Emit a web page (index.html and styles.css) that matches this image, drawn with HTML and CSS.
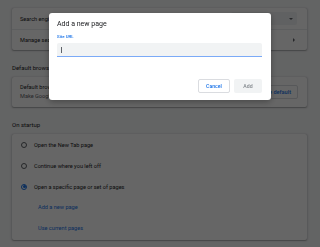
FILE: index.html
```html
<!DOCTYPE html>
<html>
<head>
<meta charset="utf-8">
<link rel="stylesheet" href="styles.css">
</head>
<body>
<div class="page">
  <div class="card">
    <div class="row">
      <span class="label">Search engine used in the address bar</span>
      <span class="select"><span class="caret-down"></span></span>
    </div>
    <div class="row divided">
      <span class="label">Manage search engines</span>
      <span class="caret-right"></span>
    </div>
  </div>

  <div class="heading">Default browser</div>
  <div class="card card2">
    <div class="two-line">
      <span>Default browser</span>
      <span>Make Google Chrome the default browser</span>
    </div>
    <span class="btn-outline">Make default</span>
  </div>

  <div class="heading">On startup</div>
  <div class="card card3">
    <div class="radio-row"><span class="radio"></span><span>Open the New Tab page</span></div>
    <div class="radio-row"><span class="radio"></span><span>Continue where you left off</span></div>
    <div class="radio-row"><span class="radio checked"></span><span>Open a specific page or set of pages</span></div>
    <div class="link-row">Add a new page</div>
    <div class="link-row">Use current pages</div>
  </div>
</div>

<div class="scrim"></div>
<div class="dialog">
  <div class="dlg-title">Add a new page</div>
  <div class="field-label">Site URL</div>
  <div class="input"><span class="cursor"></span></div>
  <div class="actions">
    <span class="btn cancel">Cancel</span>
    <span class="btn add">Add</span>
  </div>
</div>
</body>
</html>
```

FILE: styles.css
```css
* { box-sizing: border-box; }
html, body { margin: 0; padding: 0; }
body {
  width: 320px;
  height: 247px;
  overflow: hidden;
  background: #f8f9fa;
  font-family: Roboto, "Liberation Sans", sans-serif;
  color: #202124;
  font-size: 5.6px;
}
.page {
  padding: 8px 13px 0 12px;
}
.card {
  background: #fff;
  border-radius: 2px;
  box-shadow: 0 0.5px 1px rgba(60,64,67,.3), 0 0.5px 2px 0.5px rgba(60,64,67,.15);
}
.row {
  height: 21px;
  display: flex;
  align-items: center;
  padding: 0 10px 0 8px;
  justify-content: space-between;
}
.divided { border-top: 1px solid #e8eaed; height: 21px; }
.select {
  width: 66px;
  height: 13px;
  background: #f1f3f4;
  border-radius: 2px;
  display: flex;
  align-items: center;
  justify-content: flex-end;
  padding-right: 4px;
}
.caret-down {
  width: 0; height: 0;
  border-left: 2px solid transparent;
  border-right: 2px solid transparent;
  border-top: 2px solid #5f6368;
}
.caret-right {
  width: 0; height: 0;
  border-top: 2px solid transparent;
  border-bottom: 2px solid transparent;
  border-left: 2px solid #5f6368;
  margin-right: 2px;
}
.heading {
  padding: 14px 0 0 0;
  height: 27px;
  line-height: 8px;
  font-size: 6px;
  color: #202124;
}
.heading + .card3 { }
.card2 {
  height: 30px;
  display: flex;
  align-items: center;
  justify-content: space-between;
  padding: 0 9px 0 8px;
}
.two-line {
  display: flex;
  flex-direction: column;
  line-height: 9px;
}
.two-line span:last-child { color: #5f6368; }
.btn-outline {
  height: 14px;
  line-height: 12px;
  border: 1px solid #dadce0;
  border-radius: 2px;
  padding: 0 6px;
  color: #1a73e8;
  font-weight: 500;
}
.card3 {
  height: 106px;
  padding: 0;
}
.radio-row {
  height: 21px;
  display: flex;
  align-items: center;
  padding-left: 9px;
  gap: 7px;
}
.radio {
  width: 6px; height: 6px;
  border: 1px solid #5f6368;
  border-radius: 50%;
  display: flex;
  align-items: center;
  justify-content: center;
}
.radio.checked { border-color: #1a73e8; }
.radio.checked::after {
  content: "";
  width: 3px; height: 3px;
  border-radius: 50%;
  background: #1a73e8;
}
.link-row {
  height: 21px;
  line-height: 21px;
  padding-left: 26px;
  color: #1a73e8;
}
.scrim {
  position: fixed;
  inset: 0;
  background: rgba(0,0,0,0.6);
}
.dialog {
  position: fixed;
  left: 49px;
  top: 13px;
  width: 222px;
  height: 87px;
  background: #fff;
  border-radius: 3px;
  box-shadow: 0 2px 6px rgba(0,0,0,.3);
  padding: 7px 9px 7px 8px;
  display: flex;
  flex-direction: column;
}
.dlg-title {
  font-size: 7px;
  line-height: 9px;
  color: #202124;
}
.field-label {
  margin-top: 5px;
  font-size: 4.4px;
  line-height: 5px;
  color: #1a73e8;
  font-weight: 500;
}
.input {
  margin-top: 4px;
  height: 14px;
  background: #f1f3f4;
  border-radius: 2px 2px 0 0;
  border-bottom: 1px solid #7baaf7;
  display: flex;
  align-items: center;
  padding-left: 4px;
}
.cursor {
  width: 0.7px;
  height: 6px;
  background: #5f6368;
}
.actions {
  margin-top: auto;
  display: flex;
  justify-content: flex-end;
  gap: 4px;
}
.btn {
  height: 14px;
  line-height: 14px;
  border-radius: 2px;
  text-align: center;
  font-weight: 500;
  font-size: 5.2px;
}
.cancel {
  width: 32px;
  border: 1px solid #dadce0;
  line-height: 12px;
  color: #1a73e8;
}
.add {
  width: 28px;
  background: #f1f3f4;
  color: #80868b;
}
```
